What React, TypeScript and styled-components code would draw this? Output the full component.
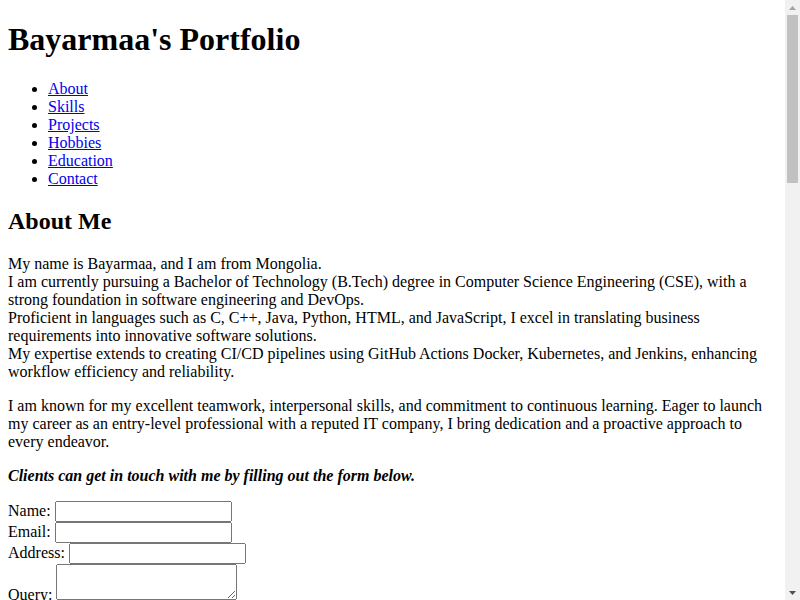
import React from "react";
import styled, { createGlobalStyle } from "styled-components";

const GlobalStyle = createGlobalStyle`
  html { background: #ffffff; }
  body {
    margin: 0 23px 8px 8px;
    font-family: "Liberation Serif", "Times New Roman", serif;
    font-size: 16px;
    color: #000000;
  }
`;

const Page = styled.div`
  display: block;
`;

const Title = styled.h1`
  font-size: 32px;
  font-weight: bold;
  margin: 21.44px 0;
`;

const NavList = styled.ul`
  margin: 16px 0;
  padding-left: 40px;
  list-style: disc;
`;

const NavLink = styled.a`
  color: #0000ee;
  text-decoration: underline;
`;

const Section = styled.section`
  display: block;
`;

const SectionTitle = styled.h2`
  font-size: 24px;
  font-weight: bold;
  margin: 19.92px 0;
`;

const SubTitle = styled.h3`
  font-size: 18.72px;
  font-weight: bold;
  margin: 18.72px 0;
`;

const Paragraph = styled.p`
  margin: 16px 0;
`;

const Emphasis = styled.p`
  margin: 16px 0;
  font-weight: bold;
  font-style: italic;
`;

const Form = styled.form`
  display: block;
`;

const FieldRow = styled.div`
  display: block;
`;

const Label = styled.label`
  font: inherit;
`;

const Input = styled.input`
  box-sizing: border-box;
  width: 177px;
  height: 21px;
`;

const TextArea = styled.textarea`
  box-sizing: border-box;
  width: 181px;
  height: 36px;
`;

const SubmitButton = styled.button``;

const List = styled.ul`
  margin: 16px 0;
  padding-left: 40px;
`;

/* Classic scrollbar drawn over the page's right edge */
const ScrollBar = styled.div`
  position: fixed;
  top: 0;
  right: 0;
  bottom: 0;
  width: 15px;
  background: #f1f1f1;
  display: flex;
  flex-direction: column;
`;

const ArrowButton = styled.div`
  height: 15px;
  flex: 0 0 15px;
  display: flex;
  align-items: center;
  justify-content: center;
`;

const Track = styled.div`
  flex: 1;
  padding: 0 2px;
`;

const Thumb = styled.div`
  height: 168px;
  background: #c1c1c1;
`;

const Arrow = ({ up, color }: { up?: boolean; color: string }) => (
  <svg width="7" height="4" viewBox="0 0 7 4">
    <path d={up ? "M0 4 L3.5 0 L7 4 Z" : "M0 0 L3.5 4 L7 0 Z"} fill={color} />
  </svg>
);

const navItems = ["About", "Skills", "Projects", "Hobbies", "Education", "Contact"];

const projects = [
  {
    name: "Personal Portfolio Website",
    text: "A responsive personal portfolio website built with HTML, CSS and JavaScript to present my skills, projects and contact information.",
  },
  {
    name: "CI/CD Pipeline with Jenkins",
    text: "An automated build, test and deployment pipeline for a Java web application using Jenkins, Maven and Docker.",
  },
  {
    name: "Kubernetes Deployment",
    text: "Deployment of a containerized microservice application on a Kubernetes cluster with services, deployments and config maps.",
  },
  {
    name: "GitHub Actions Workflow",
    text: "Automated testing and container image publishing workflow for a Python project using GitHub Actions.",
  },
];

export default function App() {
  return (
    <Page>
      <GlobalStyle />
      <Title>Bayarmaa's Portfolio</Title>
      <NavList>
        {navItems.map((n) => (
          <li key={n}>
            <NavLink href={`#${n.toLowerCase()}`}>{n}</NavLink>
          </li>
        ))}
      </NavList>

      <Section id="about">
        <SectionTitle>About Me</SectionTitle>
        <Paragraph>
          My name is Bayarmaa, and I am from Mongolia.
          <br />
          I am currently pursuing a Bachelor of Technology (B.Tech) degree in Computer Science Engineering (CSE), with a strong foundation in software engineering and DevOps.
          <br />
          Proficient in languages such as C, C++, Java, Python, HTML, and JavaScript, I excel in translating business requirements into innovative software solutions.
          <br />
          My expertise extends to creating CI/CD pipelines using GitHub Actions Docker, Kubernetes, and Jenkins, enhancing workflow efficiency and reliability.
        </Paragraph>
        <Paragraph>
          I am known for my excellent teamwork, interpersonal skills, and commitment to continuous learning. Eager to launch my career as an entry-level professional with a reputed IT company, I bring dedication and a proactive approach to every endeavor.
        </Paragraph>
        <Emphasis>Clients can get in touch with me by filling out the form below.</Emphasis>
        <Form onSubmit={(e) => e.preventDefault()}>
          <FieldRow>
            <Label htmlFor="name">Name: </Label>
            <Input id="name" type="text" />
          </FieldRow>
          <FieldRow>
            <Label htmlFor="email">Email: </Label>
            <Input id="email" type="email" />
          </FieldRow>
          <FieldRow>
            <Label htmlFor="address">Address: </Label>
            <Input id="address" type="text" />
          </FieldRow>
          <FieldRow>
            <Label htmlFor="query">Query: </Label>
            <TextArea id="query" />
          </FieldRow>
          <FieldRow>
            <SubmitButton type="submit">Submit</SubmitButton>
          </FieldRow>
        </Form>
      </Section>

      <Section id="skills">
        <SectionTitle>Skills</SectionTitle>
        <List>
          <li>C</li>
          <li>C++</li>
          <li>Java</li>
          <li>Python</li>
          <li>HTML</li>
          <li>CSS</li>
          <li>JavaScript</li>
          <li>Git and GitHub</li>
          <li>GitHub Actions</li>
          <li>Docker</li>
          <li>Kubernetes</li>
          <li>Jenkins</li>
          <li>Linux</li>
        </List>
      </Section>

      <Section id="projects">
        <SectionTitle>Projects</SectionTitle>
        {projects.map((p) => (
          <div key={p.name}>
            <SubTitle>{p.name}</SubTitle>
            <Paragraph>{p.text}</Paragraph>
          </div>
        ))}
      </Section>

      <Section id="hobbies">
        <SectionTitle>Hobbies</SectionTitle>
        <List>
          <li>Reading books</li>
          <li>Traveling</li>
          <li>Playing chess</li>
          <li>Listening to music</li>
          <li>Horse riding</li>
        </List>
      </Section>

      <Section id="education">
        <SectionTitle>Education</SectionTitle>
        <Paragraph>
          Bachelor of Technology (B.Tech) in Computer Science Engineering (CSE)
          <br />
          Currently pursuing
        </Paragraph>
        <Paragraph>
          Higher Secondary Education
          <br />
          Ulaanbaatar, Mongolia
        </Paragraph>
      </Section>

      <Section id="contact">
        <SectionTitle>Contact</SectionTitle>
        <Paragraph>
          Email: bayarmaa@example.com
          <br />
          Phone: +976 0000 0000
          <br />
          Location: Ulaanbaatar, Mongolia
        </Paragraph>
        <Paragraph>© 2024 Bayarmaa. All rights reserved.</Paragraph>
      </Section>

      <ScrollBar aria-hidden="true">
        <ArrowButton>
          <Arrow up color="#a3a3a3" />
        </ArrowButton>
        <Track>
          <Thumb />
        </Track>
        <ArrowButton>
          <Arrow color="#505050" />
        </ArrowButton>
      </ScrollBar>
    </Page>
  );
}
